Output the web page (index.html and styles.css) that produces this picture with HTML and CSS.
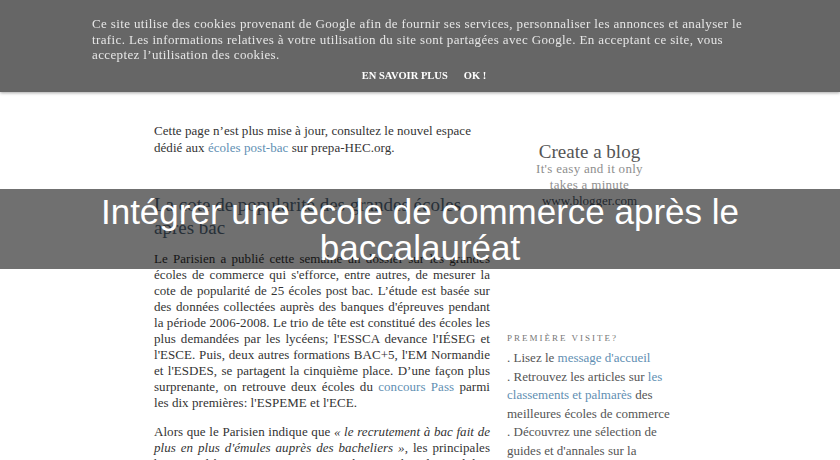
FILE: index.html
```html
<!DOCTYPE html>
<html lang="fr">
<head>
<meta charset="utf-8">
<title>Intégrer une école de commerce après le baccalauréat</title>
<link rel="stylesheet" href="styles.css">
</head>
<body>
<div class="wrap">
  <main class="main">
    <p class="notice">Cette page n’est plus mise à jour, consultez le nouvel espace dédié aux <a class="lnk" href="#">écoles post-bac</a> sur prepa-HEC.org.</p>
    <h3 class="post-title">La cote de popularité des grandes écoles après bac</h3>
    <p class="body">Le Parisien a publié cette semaine un dossier sur les grandes écoles de commerce qui s'efforce, entre autres, de mesurer la cote de popularité de 25 écoles post bac. L’étude est basée sur des données collectées auprès des banques d'épreuves pendant la période 2006-2008. Le trio de tête est constitué des écoles les plus demandées par les lycéens; l'ESSCA devance l'IÉSEG et l'ESCE. Puis, deux autres formations BAC+5, l'EM Normandie et l'ESDES, se partagent la cinquième place. D’une façon plus surprenante, on retrouve deux écoles du <a class="lnk" href="#">concours Pass</a> parmi les dix premières: l'ESPEME et l'ECE.</p>
    <p class="body">Alors que le Parisien indique que <em>« le recrutement à bac fait de plus en plus d'émules auprès des bacheliers »</em>, les principales banques d'épreuves ont pourtant vu leur nombre de candidats stagner ou reculer.</p>
  </main>
  <aside class="side">
    <div class="blogger">
      <div class="cab">Create a blog</div>
      <div class="sub">It's easy and it only<br>takes a minute</div>
      <div class="url">www.blogger.com</div>
    </div>
    <h4 class="side-title">Première visite?</h4>
    <div class="list">. Lisez le <a class="lnk" href="#">message d'accueil</a><br>. Retrouvez les articles sur <a class="lnk" href="#">les classements et palmarès</a> des meilleures écoles de commerce<br>. Découvrez une sélection de guides et d'annales sur la boutique</div>
  </aside>
</div>

<div class="cookie">
  <div class="cookie-text">Ce site utilise des cookies provenant de Google afin de fournir ses services, personnaliser les annonces et analyser le trafic. Les informations relatives à votre utilisation du site sont partagées avec Google. En acceptant ce site, vous acceptez l’utilisation des cookies.</div>
  <div class="cookie-actions"><a href="#">En savoir plus</a><a href="#">Ok !</a></div>
</div>

<div class="band">
  <h1 class="band-title">Intégrer une école de commerce après le baccalauréat</h1>
</div>
</body>
</html>
```
FILE: styles.css
```css
html, body {
  margin: 0;
  padding: 0;
  background: #fff;
}
body {
  font-family: "Liberation Serif", "Times New Roman", serif;
  color: #333;
  overflow: hidden;
  height: 460px;
}
a { text-decoration: none; }
.lnk { color: #5f8fb3; }

.wrap {
  width: 532px;
  margin: 0 auto;
  padding-top: 122px;
  display: flex;
  gap: 17px;
  align-items: flex-start;
}
.main {
  width: 336px;
  flex: none;
  letter-spacing: 0.05px;
}
.notice {
  margin: 0;
  font-size: 13px;
  line-height: 17px;
}
.post-title {
  margin: 37px 0 12px;
  font-size: 19px;
  line-height: 23px;
  font-weight: normal;
  color: #5a6f82;
  letter-spacing: 0;
}
.body {
  margin: 0 0 13px;
  font-size: 13px;
  line-height: 16px;
  text-align: justify;
}

.side {
  width: 165px;
  flex: none;
  padding-top: 20px;
}
.blogger { text-align: center; }
.cab {
  font-size: 19px;
  line-height: 19px;
  font-weight: normal;
  color: #555;
}
.sub {
  font-size: 13px;
  line-height: 16px;
  color: #8e8e8e;
  letter-spacing: 0.3px;
}
.url {
  font-size: 13px;
  line-height: 16px;
  color: #4f5a6a;
}
.side-title {
  margin: 123px 0 5px;
  font-size: 9px;
  line-height: 12px;
  letter-spacing: 2px;
  text-transform: uppercase;
  font-weight: normal;
  color: #777;
}
.list {
  font-size: 13px;
  line-height: 18.6px;
  color: #555;
}

.cookie {
  position: fixed;
  top: 0;
  left: 0;
  right: 0;
  height: 92px;
  background: #666;
  box-shadow: 0 1px 3px rgba(0, 0, 0, 0.35);
}
.cookie-text {
  width: 656px;
  margin: 0 auto;
  padding-top: 16px;
  font-size: 13px;
  line-height: 15.5px;
  letter-spacing: 0.37px;
  color: #e6e6e6;
}
.cookie-actions {
  margin-top: 7px;
  padding-left: 8px;
  display: flex;
  justify-content: center;
  gap: 16px;
}
.cookie-actions a {
  color: #fff;
  font-size: 10.5px;
  font-weight: bold;
  text-transform: uppercase;
}

.band {
  position: absolute;
  top: 189px;
  left: 0;
  right: 0;
  padding: 5px 0 3px;
  background: rgba(0, 0, 0, 0.56);
}
.band-title {
  max-width: 720px;
  margin: 0 auto;
  font-family: "Liberation Sans", Arial, sans-serif;
  font-size: 35px;
  line-height: 36px;
  font-weight: normal;
  color: #fff;
  text-align: center;
}
```
